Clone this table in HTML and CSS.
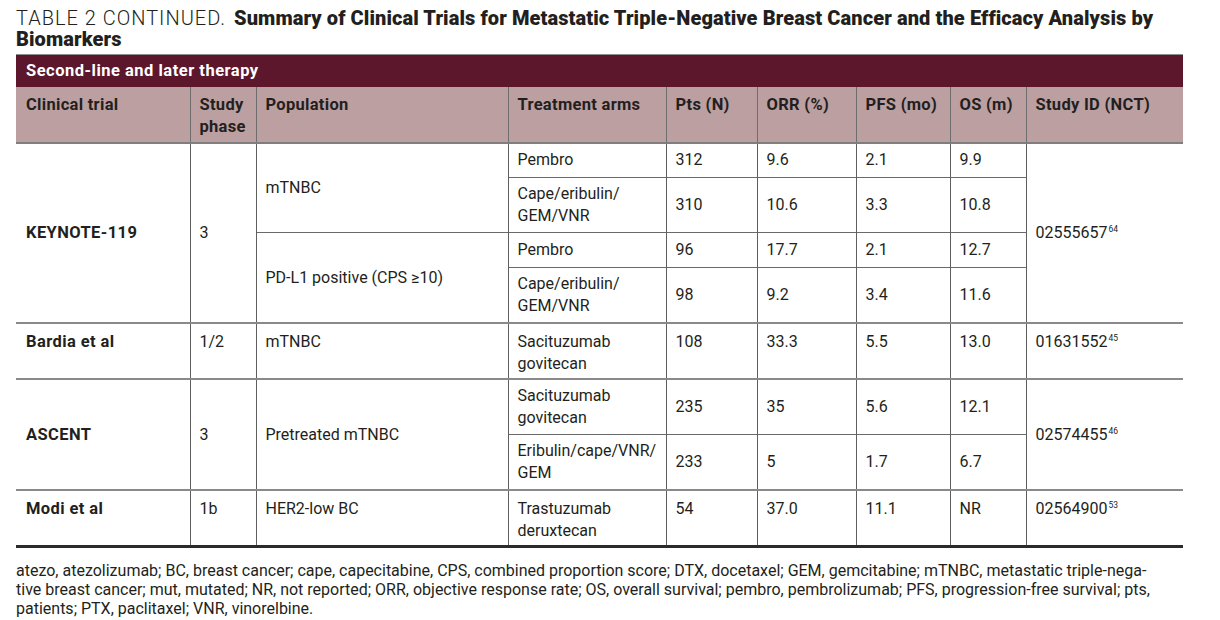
FILE: index.html
```html
<!DOCTYPE html>
<html lang="en">
<head>
<meta charset="utf-8">
<title>Table 2 continued</title>
<link rel="stylesheet" href="styles.css">
</head>
<body>
<div class="page">
  <h1 class="caption"><span class="label">TABLE 2 CONTINUED.</span> <span class="title">Summary of Clinical Trials for Metastatic Triple-Negative Breast Cancer and the Efficacy Analysis by Biomarkers</span></h1>
  <table class="trials">
    <colgroup>
      <col class="c1"><col class="c2"><col class="c3"><col class="c4"><col class="c5"><col class="c6"><col class="c7"><col class="c8"><col class="c9">
    </colgroup>
    <thead>
      <tr class="section"><th colspan="9">Second-line and later therapy</th></tr>
      <tr class="heads">
        <th>Clinical trial</th>
        <th>Study phase</th>
        <th>Population</th>
        <th>Treatment arms</th>
        <th>Pts (N)</th>
        <th>ORR (%)</th>
        <th>PFS (mo)</th>
        <th>OS (m)</th>
        <th>Study ID (NCT)</th>
      </tr>
    </thead>
    <tbody>
      <tr class="grp one">
        <td rowspan="4" class="trial">KEYNOTE-119</td>
        <td rowspan="4">3</td>
        <td rowspan="2">mTNBC</td>
        <td>Pembro</td><td>312</td><td>9.6</td><td>2.1</td><td>9.9</td>
        <td rowspan="4">02555657<sup>64</sup></td>
      </tr>
      <tr class="sub"><td>Cape/eribulin/<br>GEM/VNR</td><td>310</td><td>10.6</td><td>3.3</td><td>10.8</td></tr>
      <tr class="sub one">
        <td rowspan="2">PD-L1 positive (CPS ≥10)</td>
        <td>Pembro</td><td>96</td><td>17.7</td><td>2.1</td><td>12.7</td>
      </tr>
      <tr class="sub"><td>Cape/eribulin/<br>GEM/VNR</td><td>98</td><td>9.2</td><td>3.4</td><td>11.6</td></tr>

      <tr class="grp top">
        <td class="trial">Bardia et al</td><td>1/2</td><td>mTNBC</td>
        <td>Sacituzumab<br>govitecan</td><td>108</td><td>33.3</td><td>5.5</td><td>13.0</td>
        <td>01631552<sup>45</sup></td>
      </tr>

      <tr class="grp">
        <td rowspan="2" class="trial">ASCENT</td><td rowspan="2">3</td><td rowspan="2">Pretreated mTNBC</td>
        <td>Sacituzumab<br>govitecan</td><td>235</td><td>35</td><td>5.6</td><td>12.1</td>
        <td rowspan="2">02574455<sup>46</sup></td>
      </tr>
      <tr class="sub"><td>Eribulin/cape/VNR/<br>GEM</td><td>233</td><td>5</td><td>1.7</td><td>6.7</td></tr>

      <tr class="grp top last">
        <td class="trial">Modi et al</td><td>1b</td><td>HER2-low BC</td>
        <td>Trastuzumab<br>deruxtecan</td><td>54</td><td>37.0</td><td>11.1</td><td>NR</td>
        <td>02564900<sup>53</sup></td>
      </tr>
    </tbody>
  </table>
  <p class="notes">atezo, atezolizumab; BC, breast cancer; cape, capecitabine, CPS, combined proportion score; DTX, docetaxel; GEM, gemcitabine; mTNBC, metastatic triple-nega-<br>tive breast cancer; mut, mutated; NR, not reported; ORR, objective response rate; OS, overall survival; pembro, pembrolizumab; PFS, progression-free survival; pts,<br>patients; PTX, paclitaxel; VNR, vinorelbine.</p>
</div>
</body>
</html>
```
FILE: styles.css
```css
* { box-sizing: border-box; }
html, body { margin: 0; padding: 0; background: #ffffff; }
body {
  font-family: Roboto, "Liberation Sans", sans-serif;
  color: #231f20;
}
.page {
  width: 1167px;
  margin-left: 16px;
  padding-top: 8px;
}
.caption {
  margin: 0 0 4px 0;
  font-size: 20px;
  line-height: 21px;
  font-weight: normal;
  width: 1167px;
  color: #231f20;
}
.caption .label {
  font-weight: 300;
  font-size: 20px;
  letter-spacing: 1px;
  margin-right: 3px;
}
.caption .title {
  font-weight: 900;
  letter-spacing: 0.1px;
}

.trials {
  width: 1167px;
  border-collapse: collapse;
  table-layout: fixed;
  font-size: 16px;
  line-height: 22px;
}
.c1 { width: 174px; } .c2 { width: 66px; } .c3 { width: 252px; } .c4 { width: 158px; }
.c5 { width: 91px; } .c6 { width: 99px; } .c7 { width: 94px; } .c8 { width: 76px; } .c9 { width: 157px; }

.section th {
  background: #5c172d;
  color: #ffffff;
  text-align: left;
  font-weight: bold;
  font-size: 16.5px;
  letter-spacing: 0.5px;
  height: 32px;
  padding: 0 10px;
  border-top: 1px solid #8c8c8c;
}
.heads th {
  background: #bc9fa1;
  text-align: left;
  vertical-align: top;
  font-weight: bold;
  font-size: 16.5px;
  letter-spacing: 0.3px;
  padding: 7px 8px 4px 9px;
  height: 56px;
  border-left: 1px solid #6d6d6d;
  border-bottom: 2px solid #7f7f7f;
}
.heads th:first-child { border-left: none; padding-left: 10px; }

.trials td {
  padding: 5px 8px 5px 9px;
  vertical-align: middle;
  border-left: 1px solid #5e5e5e;
  border-top: 1px solid #6a6a6a;
}
.trials tr.one { height: 35px; }
.trials td.trial {
  border-left: none;
  font-weight: bold;
  font-size: 16.5px;
  letter-spacing: 0.4px;
  padding-left: 10px;
}
.trials tr.grp td { border-top: 2px solid #8a8a8a; }
.trials tr.top td { vertical-align: top; padding-top: 7px; padding-bottom: 3px; }
.trials tr.last td { border-bottom: 3px solid #2b2b2b; }
sup {
  font-size: 8.5px;
  line-height: 0;
  vertical-align: 6px;
  margin-left: 1px;
}
.notes {
  margin: 0;
  padding: 13px 0 6px 0;
  font-size: 16px;
  line-height: 19px;
  border-bottom: 1px solid #8a8a8a;
}
```
